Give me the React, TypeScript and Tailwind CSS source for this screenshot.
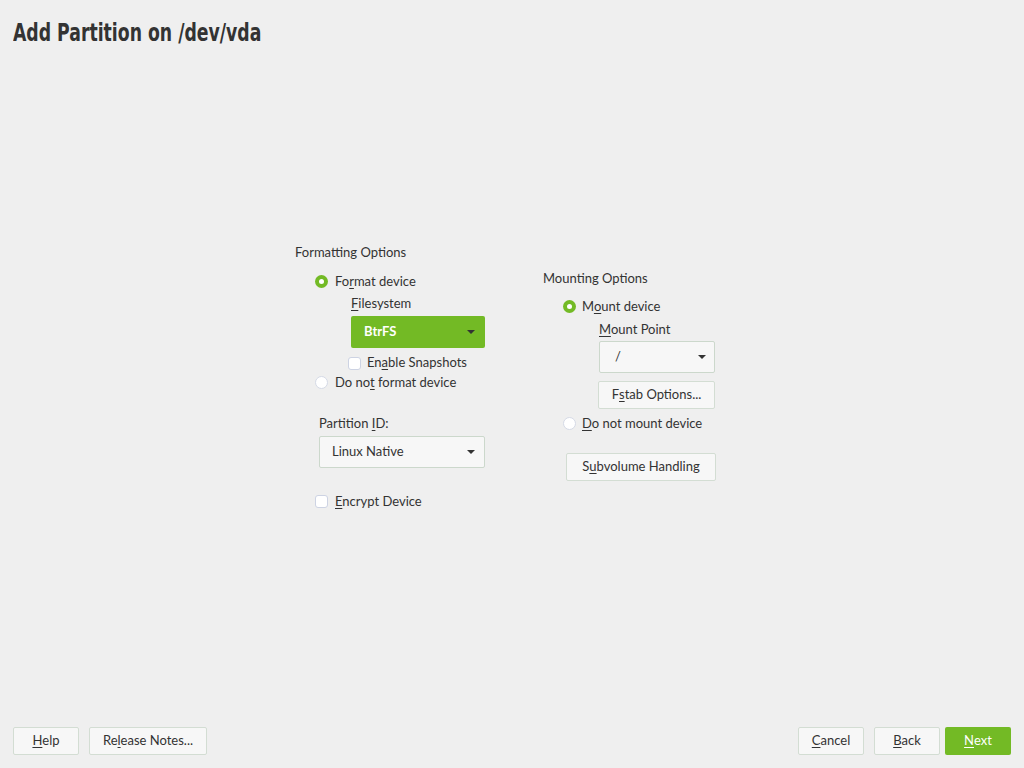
import React from "react";

const font = { fontFamily: "Lato, 'Noto Sans', sans-serif" };

function Radio({ checked }: { checked?: boolean }) {
  return checked ? (
    <span className="w-[13px] h-[13px] rounded-full bg-[#73ba25] flex items-center justify-center shrink-0">
      <span className="w-[5px] h-[5px] rounded-full bg-white" />
    </span>
  ) : (
    <span className="w-[13px] h-[13px] rounded-full bg-white border border-[#d5dae6] shrink-0" />
  );
}

function Check() {
  return <span className="w-[13px] h-[13px] rounded-[3px] bg-white border border-[#cdd3e3] shrink-0" />;
}

function Arrow({ color = "#333" }: { color?: string }) {
  return (
    <svg width="8" height="4" viewBox="0 0 8 4" className="shrink-0">
      <path d="M0 0h8L4 4z" fill={color} />
    </svg>
  );
}

function Btn({ children, green, className = "" }: { children: React.ReactNode; green?: boolean; className?: string }) {
  return (
    <button
      className={
        green
          ? "h-[28px] rounded-[2px] bg-[#73ba25] text-white text-[13px] flex items-center justify-center " + className
          : "h-[28px] rounded-[2px] bg-[#f7f7f7] border border-[#d3ddd3] text-[#333] text-[13px] flex items-center justify-center " + className
      }
    >
      {children}
    </button>
  );
}

export default function App() {
  return (
    <div className="w-[1024px] h-[768px] bg-[#efefef] text-[#333] flex flex-col overflow-hidden" style={font}>
      <h1
        className="ml-[13px] pt-[18px] text-[24px] font-bold leading-[30px] text-[#333] origin-left scale-x-[0.8] whitespace-nowrap"
        style={{ fontFamily: "'DejaVu Sans', sans-serif", fontStretch: "condensed" }}
      >
        Add Partition on /dev/vda
      </h1>

      <div className="flex-1 flex items-start pl-[295px] gap-[58px]">
        {/* left column */}
        <div className="flex flex-col w-[190px] text-[13px] mt-[197px]">
          <p className="leading-[15px]">Formatting Options</p>
          <div className="pl-[20px] mt-[14px] flex flex-col">
            <div className="flex items-center gap-[7px] h-[15px]">
              <Radio checked />
              <span>Fo<u className="underline-offset-2">r</u>mat device</span>
            </div>
            <div className="pl-[36px] mt-[7px] flex flex-col">
              <span className="leading-[15px]"><u className="underline-offset-2">F</u>ilesystem</span>
              <div className="mt-[5px] h-[32px] w-[134px] rounded-[2px] bg-[#73ba25] flex items-center justify-between pl-[13px] pr-[10px] text-white font-bold">
                <span>BtrFS</span>
                <Arrow color="#333" />
              </div>
              <div className="flex items-center gap-[6px] mt-[8px] -ml-[3px] h-[14px]">
                <Check />
                <span>En<u className="underline-offset-2">a</u>ble Snapshots</span>
              </div>
            </div>
            <div className="flex items-center gap-[7px] mt-[5px] h-[15px]">
              <Radio />
              <span>Do no<u className="underline-offset-2">t</u> format device</span>
            </div>
          </div>
          <div className="pl-[24px] mt-[26px] flex flex-col">
            <span className="leading-[15px]">Partition <u className="underline-offset-2">I</u>D:</span>
            <div className="mt-[5px] h-[32px] w-[166px] rounded-[2px] bg-[#f7f7f7] border border-[#ccd8cc] flex items-center justify-between pl-[12px] pr-[9px]">
              <span>Linux Native</span>
              <Arrow />
            </div>
          </div>
          <div className="pl-[20px] mt-[26px] flex items-center gap-[7px] h-[15px]">
            <Check />
            <span><u className="underline-offset-2">E</u>ncrypt Device</span>
          </div>
        </div>

        {/* right column */}
        <div className="flex flex-col text-[13px] mt-[223px]">
          <p className="leading-[15px]">Mounting Options</p>
          <div className="pl-[20px] mt-[13px] flex flex-col">
            <div className="flex items-center gap-[6px] h-[15px]">
              <Radio checked />
              <span>M<u className="underline-offset-2">o</u>unt device</span>
            </div>
            <div className="pl-[36px] mt-[8px] flex flex-col">
              <span className="leading-[15px]"><u className="underline-offset-2">M</u>ount Point</span>
              <div className="mt-[4px] h-[32px] w-[116px] rounded-[2px] bg-[#f7f7f7] border border-[#ccd8cc] flex items-center justify-between pl-[15px] pr-[8px]">
                <span>/</span>
                <Arrow />
              </div>
              <Btn className="mt-[8px] w-[117px] -ml-[1px]">F<u className="underline-offset-2">s</u>tab Options...</Btn>
            </div>
            <div className="flex items-center gap-[6px] mt-[7px] h-[15px]">
              <Radio />
              <span><u className="underline-offset-2">D</u>o not mount device</span>
            </div>
          </div>
          <Btn className="ml-[23px] mt-[22px] w-[150px]">S<u className="underline-offset-2">u</u>bvolume Handling</Btn>
        </div>
      </div>

      <div className="flex items-center justify-between px-[13px] pb-[13px]">
        <div className="flex gap-[10px]">
          <Btn className="w-[66px]"><u className="underline-offset-2">H</u>elp</Btn>
          <Btn className="w-[118px]">Re<u className="underline-offset-2">l</u>ease Notes...</Btn>
        </div>
        <div className="flex gap-[10px]">
          <Btn className="w-[66px]"><u className="underline-offset-2">C</u>ancel</Btn>
          <Btn className="w-[66px]"><u className="underline-offset-2">B</u>ack</Btn>
          <Btn green className="w-[66px] -ml-[5px]"><u className="underline-offset-2">N</u>ext</Btn>
        </div>
      </div>
    </div>
  );
}
